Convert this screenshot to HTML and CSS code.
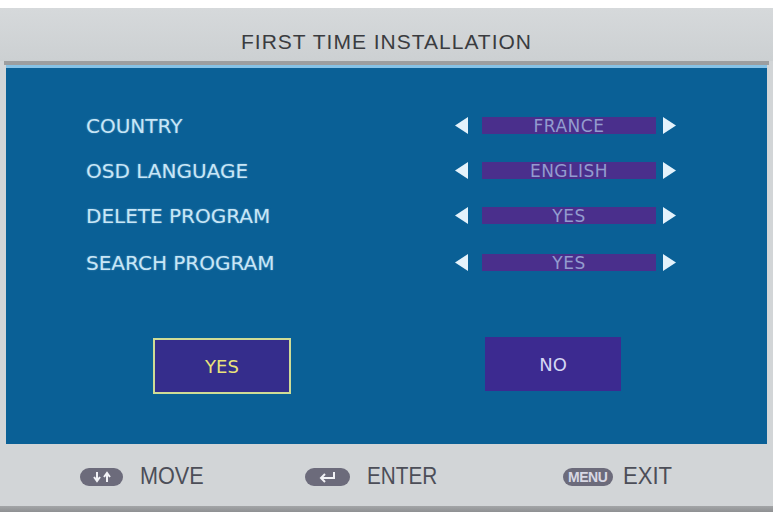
FILE: index.html
```html
<!DOCTYPE html>
<html>
<head>
<meta charset="utf-8">
<link rel="stylesheet" href="styles.css">
</head>
<body>
<div class="screen">
  <div class="header"><span class="title">FIRST TIME INSTALLATION</span></div>
  <div class="rule-dark"></div>
  <div class="rule-light"></div>
  <div class="panel">
    <div class="rows">
      <div class="row">
        <span class="label">COUNTRY</span>
        <div class="selector">
          <svg class="arrow" width="13" height="17" viewBox="0 0 13 17"><polygon points="13,0 13,17 0,8.5"/></svg>
          <span class="value">FRANCE</span>
          <svg class="arrow" width="13" height="17" viewBox="0 0 13 17"><polygon points="0,0 0,17 13,8.5"/></svg>
        </div>
      </div>
      <div class="row">
        <span class="label">OSD LANGUAGE</span>
        <div class="selector">
          <svg class="arrow" width="13" height="17" viewBox="0 0 13 17"><polygon points="13,0 13,17 0,8.5"/></svg>
          <span class="value">ENGLISH</span>
          <svg class="arrow" width="13" height="17" viewBox="0 0 13 17"><polygon points="0,0 0,17 13,8.5"/></svg>
        </div>
      </div>
      <div class="row">
        <span class="label">DELETE PROGRAM</span>
        <div class="selector">
          <svg class="arrow" width="13" height="17" viewBox="0 0 13 17"><polygon points="13,0 13,17 0,8.5"/></svg>
          <span class="value">YES</span>
          <svg class="arrow" width="13" height="17" viewBox="0 0 13 17"><polygon points="0,0 0,17 13,8.5"/></svg>
        </div>
      </div>
      <div class="row row-last">
        <span class="label">SEARCH PROGRAM</span>
        <div class="selector">
          <svg class="arrow" width="13" height="17" viewBox="0 0 13 17"><polygon points="13,0 13,17 0,8.5"/></svg>
          <span class="value">YES</span>
          <svg class="arrow" width="13" height="17" viewBox="0 0 13 17"><polygon points="0,0 0,17 13,8.5"/></svg>
        </div>
      </div>
    </div>
    <div class="buttons">
      <div class="btn btn-yes">YES</div>
      <div class="btn btn-no">NO</div>
    </div>
  </div>
  <div class="footer">
    <div class="hint hint-move">
      <span class="pill pill-move">
        <svg width="24" height="12" viewBox="0 0 24 12"><path d="M7 1v8M4 6l3 4 3-4M17 11V3M14 6l3-4 3 4" fill="none" stroke="#f2f2f6" stroke-width="2"/></svg>
      </span>
      <span class="hint-text text-move">MOVE</span>
    </div>
    <div class="hint hint-enter">
      <span class="pill pill-enter">
        <svg width="22" height="12" viewBox="0 0 22 12"><path d="M18 1v6H5M9 3L5 7l4 4" fill="none" stroke="#f2f2f6" stroke-width="2"/></svg>
      </span>
      <span class="hint-text text-enter">ENTER</span>
    </div>
    <div class="hint hint-exit">
      <span class="pill pill-menu">MENU</span>
      <span class="hint-text text-exit">EXIT</span>
    </div>
  </div>
  <div class="rule-bottom"></div>
</div>
</body>
</html>
```
FILE: styles.css
```css
html, body {
  margin: 0;
  padding: 0;
  background: #ffffff;
}

.screen {
  margin-top: 8px;
  width: 773px;
  background: #d2d5d7;
  display: flex;
  flex-direction: column;
}

.header {
  height: 53px;
  display: flex;
  align-items: center;
  justify-content: center;
  padding-top: 14px;
  box-sizing: border-box;
  background: linear-gradient(#d6d9db, #ccd0d2);
}

.title {
  font-family: "Liberation Sans", Arial, sans-serif;
  font-size: 21px;
  letter-spacing: 1px;
  color: #3a3c40;
}

.rule-dark {
  height: 4px;
  margin: 0 4px;
  background: #9c9ea0;
}

.rule-light {
  height: 3px;
  margin: 0 6px;
  background: #86c2e6;
}

.panel {
  margin: 0 6px;
  height: 376px;
  background: #0a6096;
  box-sizing: border-box;
  padding-top: 35px;
  display: flex;
  flex-direction: column;
}

.rows {
  display: flex;
  flex-direction: column;
  padding-left: 80px;
}

.row {
  height: 45px;
  display: flex;
  align-items: center;
}

.row-last {
  margin-top: 2px;
}

.label {
  width: 369px;
  font-family: "DejaVu Sans", Verdana, sans-serif;
  font-size: 20px;
  color: #c8e6f6;
  text-shadow: 0 0 2px rgba(160, 210, 240, 0.5);
}

.selector {
  display: flex;
  align-items: center;
}

.arrow {
  display: block;
  fill: #e4f2fb;
}

.value {
  width: 174px;
  height: 17px;
  margin: 0 7px 0 14px;
  background: #4a2f8c;
  display: flex;
  align-items: center;
  justify-content: center;
  font-family: "DejaVu Sans", Verdana, sans-serif;
  font-size: 17px;
  color: #939ccf;
  letter-spacing: 0.5px;
}

.buttons {
  display: flex;
  padding-top: 52px;
  padding-left: 147px;
  align-items: flex-start;
}

.btn {
  display: flex;
  align-items: center;
  justify-content: center;
  box-sizing: border-box;
  font-family: "DejaVu Sans", Verdana, sans-serif;
  font-size: 18px;
}

.btn-yes {
  width: 138px;
  height: 56px;
  margin-top: 1px;
  background: #352d8c;
  border: 2px solid #cfdc96;
  color: #e9e37a;
}

.btn-no {
  width: 136px;
  height: 54px;
  margin-left: 194px;
  background: #3c2a90;
  color: #d4d6f4;
}

.footer {
  height: 62px;
  display: flex;
  align-items: center;
  padding-top: 3px;
  box-sizing: border-box;
}

.hint {
  display: flex;
  align-items: center;
}

.hint-move { margin-left: 80px; }
.hint-enter { margin-left: 97px; }
.hint-exit { margin-left: 118px; }

.pill {
  display: flex;
  align-items: center;
  justify-content: center;
  height: 18px;
  border-radius: 9px;
  background: #6c6b7b;
}

.pill-move { width: 43px; }
.pill-enter { width: 45px; }
.pill-menu {
  width: 50px;
  font-family: "Liberation Sans", Arial, sans-serif;
  font-size: 14px;
  font-weight: bold;
  color: #d8d8e4;
  letter-spacing: -0.5px;
}

.hint-text {
  display: inline-block;
  margin-left: 17px;
  font-family: "Liberation Sans", Arial, sans-serif;
  font-size: 23px;
  color: #4c4e58;
  transform-origin: left center;
}

.text-move { transform: scaleX(0.94); }
.text-enter { transform: scaleX(0.90); }
.text-exit { transform: scaleX(0.96); margin-left: 10px; }

.rule-bottom {
  height: 6px;
  background: linear-gradient(#a3a5a7, #8e9092);
}
```
